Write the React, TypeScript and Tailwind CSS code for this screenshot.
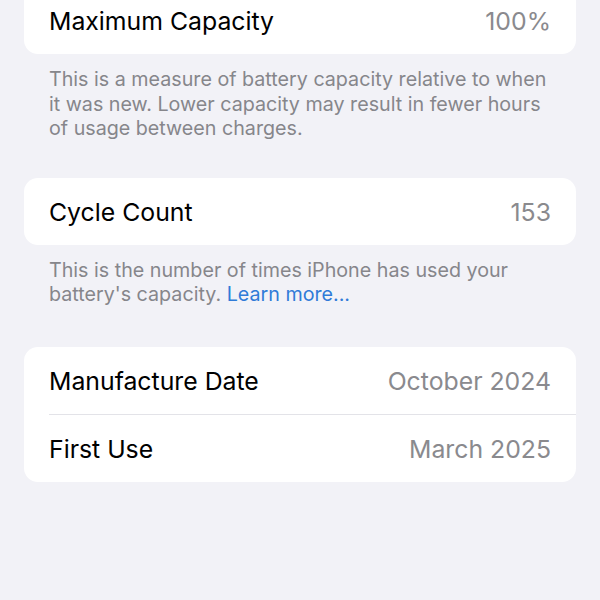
export default function App() {
  return (
    <div className="h-[600px] w-[600px] overflow-hidden bg-[#f2f2f7] px-[24px] font-['Inter','Noto_Sans',sans-serif]">
      <div className="-mt-[13px]">
        <div className="rounded-[14px] bg-white">
          <Row label="Maximum Capacity" value="100%" />
        </div>
        <p className="px-[25px] pt-[13px] pb-[37px] text-[19.7px] leading-[24.5px] text-[#86868b]">
          This is a measure of battery capacity relative to when it was new. Lower capacity may result in fewer hours
          of usage between charges.
        </p>
        <div className="rounded-[14px] bg-white">
          <Row label="Cycle Count" value="153" />
        </div>
        <p className="px-[25px] pt-[13px] pb-[40px] text-[19.7px] leading-[24.5px] text-[#86868b]">
          This is the number of times iPhone has used your battery's capacity.{" "}
          <span className="text-[#2f7bd8]">Learn more...</span>
        </p>
        <div className="rounded-[14px] bg-white">
          <Row label="Manufacture Date" value="October 2024" />
          <div className="ml-[25px] h-px bg-[#e3e3e8]" />
          <Row label="First Use" value="March 2025" />
        </div>
      </div>
    </div>
  );
}

function Row({ label, value }: { label: string; value: string }) {
  return (
    <div className="flex h-[67px] items-center justify-between px-[25px] pt-[3px] text-[24.8px]">
      <span className="text-black">{label}</span>
      <span className="text-[#8a8a8e]">{value}</span>
    </div>
  );
}
